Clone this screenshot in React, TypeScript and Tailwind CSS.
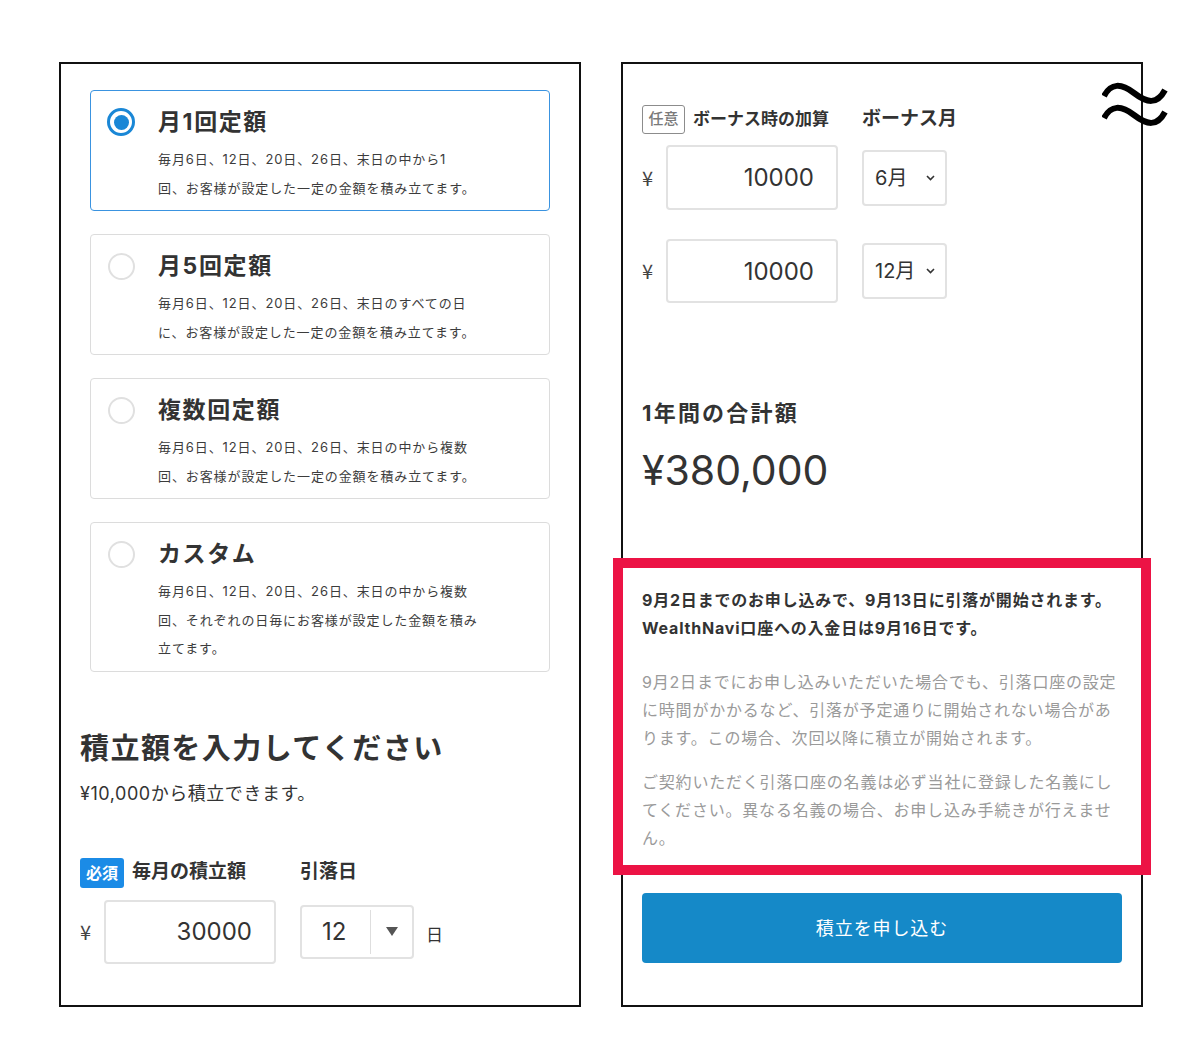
import type { ReactNode } from 'react';

const plans = [
  {
    title: '月1回定額',
    desc: ['毎月6日、12日、20日、26日、末日の中から1', '回、お客様が設定した一定の金額を積み立てます。'],
    selected: true,
  },
  {
    title: '月5回定額',
    desc: ['毎月6日、12日、20日、26日、末日のすべての日', 'に、お客様が設定した一定の金額を積み立てます。'],
  },
  {
    title: '複数回定額',
    desc: ['毎月6日、12日、20日、26日、末日の中から複数', '回、お客様が設定した一定の金額を積み立てます。'],
  },
  {
    title: 'カスタム',
    desc: [
      '毎月6日、12日、20日、26日、末日の中から複数',
      '回、それぞれの日毎にお客様が設定した金額を積み',
      '立てます。',
    ],
  },
];

function Radio({ checked }: { checked?: boolean }) {
  if (checked) {
    return (
      <span className="flex size-[28px] items-center justify-center rounded-full border-[3px] border-[#1a87d6]">
        <span className="size-[15px] rounded-full bg-[#1a87d6]" />
      </span>
    );
  }
  return <span className="m-[0.5px] block size-[27px] rounded-full border-2 border-[#e0e0e0]" />;
}

function PlanCard({ title, desc, selected }: { title: string; desc: string[]; selected?: boolean }) {
  return (
    <label
      className={
        'flex gap-[23px] rounded-[4px] border pt-[15px] pb-[8px] pl-[16px] ' +
        (selected ? 'border-[#3a93e0]' : 'border-[#dcdcdc]')
      }
    >
      <div className="pt-[2px]">
        <Radio checked={selected} />
      </div>
      <div className="w-[330px]">
        <div className="text-[23px] leading-[32px] font-bold tracking-[0.07em] text-[#333]">{title}</div>
        <p className="mt-[7px] text-[13px] leading-[28.5px] tracking-[0.9px] whitespace-nowrap text-[#3c3c3c]">
          {desc.map((line, i) => (
            <span key={i} className="block">
              {line}
            </span>
          ))}
        </p>
      </div>
    </label>
  );
}

function AmountInput({ value, tall }: { value: string; tall?: boolean }) {
  return (
    <div className="flex items-center">
      <span className="w-[24px] font-['Noto_Sans_CJK_JP',sans-serif] text-[20px] text-[#444]">¥</span>
      <input
        type="text"
        readOnly
        value={value}
        className={
          'w-[172px] rounded-[4px] border-2 border-[#e2e2e2] pr-[22px] text-right text-[24px] text-[#333] outline-none ' +
          (tall ? 'h-[65px]' : 'h-[64px]')
        }
      />
    </div>
  );
}

function MonthSelect({ value }: { value: string }) {
  return (
    <div className="flex h-[56px] w-[85px] items-center justify-between rounded-[4px] border-2 border-[#e2e2e2] pr-[10px] pl-[11px]">
      <span className="text-[20px] text-[#333]">{value}</span>
      <svg width="9" height="6" viewBox="0 0 9 6" fill="none" stroke="#333" strokeWidth="1.6">
        <polyline points="1,1 4.5,4.5 8,1" />
      </svg>
    </div>
  );
}

function FieldLabel({ badge, children, required }: { badge: string; children: ReactNode; required?: boolean }) {
  return (
    <div className="flex w-[220px] items-center">
      {required ? (
        <span className="flex h-[30px] w-[44px] items-center justify-center rounded-[3px] bg-[#1b8be6] text-[16px] font-bold text-white">
          {badge}
        </span>
      ) : (
        <span className="flex h-[29px] w-[43px] items-center justify-center rounded-[3px] border border-[#8c8c8c] text-[15px] font-medium text-[#7a7a7a]">
          {badge}
        </span>
      )}
      <span className={'ml-[8px] font-bold text-[#333] ' + (required ? 'text-[19px]' : 'text-[17px]')}>{children}</span>
    </div>
  );
}

// two stacked tildes marking where the long form was cut
function BreakMark() {
  return (
    <svg
      className="absolute top-[17px] right-[-27px]"
      width="66"
      height="48"
      viewBox="0 0 66 48"
      fill="none"
      stroke="#000"
      strokeWidth="6"
    >
      <path d="M2 15 C9 2, 19 2, 32 12 S55 24, 63 9" />
      <path d="M2 37 C9 24, 19 24, 32 34 S55 46, 63 31" />
    </svg>
  );
}

export default function App() {
  return (
    <div className="min-h-[1064px] bg-white font-['Inter','Noto_Sans_CJK_JP',sans-serif] text-[#333]">
      <div className="flex gap-[40px] pt-[62px] pl-[59px]">
        {/* left: plan choice and monthly amount */}
        <section className="flex h-[945px] w-[522px] flex-col border-2 border-[#111] px-[19px] pt-[26px]">
          <div className="mx-[10px] flex flex-col gap-[23px]">
            {plans.map((p) => (
              <PlanCard key={p.title} {...p} />
            ))}
          </div>

          <h2 className="mt-[57px] text-[29px] leading-[40px] font-bold tracking-[0.05em]">積立額を入力してください</h2>
          <p className="mt-[12px] text-[18px] leading-[26px] tracking-[0.03em]">¥10,000から積立できます。</p>

          <div className="mt-[51px] flex items-center">
            <FieldLabel badge="必須" required>
              毎月の積立額
            </FieldLabel>
            <span className="text-[19px] font-bold">引落日</span>
          </div>

          <div className="mt-[12px] flex items-center">
            <AmountInput value="30000" />
            <div className="ml-[24px] flex h-[54px] w-[114px] items-center rounded-[4px] border-2 border-[#e2e2e2]">
              <span className="w-[68px] pl-[20px] text-[24px] text-[#333]">12</span>
              <span className="h-[44px] w-px bg-[#dedede]" />
              <span className="flex flex-1 justify-center">
                <svg width="12" height="9" viewBox="0 0 12 9">
                  <polygon points="0,0 12,0 6,9" fill="#555" />
                </svg>
              </span>
            </div>
            <span className="mt-[8px] ml-[12px] text-[17px]">日</span>
          </div>
        </section>

        {/* right: bonus months, yearly total and notice */}
        <section className="relative flex h-[945px] w-[522px] flex-col border-2 border-[#111] px-[19px] pt-[41px]">
          <BreakMark />

          <div className="flex items-center">
            <FieldLabel badge="任意">ボーナス時の加算</FieldLabel>
            <span className="text-[19px] font-bold">ボーナス月</span>
          </div>

          <div className="mt-[11px] flex items-center">
            <AmountInput value="10000" tall />
            <div className="ml-[24px]">
              <MonthSelect value="6月" />
            </div>
          </div>
          <div className="mt-[29px] flex items-center">
            <AmountInput value="10000" />
            <div className="ml-[24px]">
              <MonthSelect value="12月" />
            </div>
          </div>

          <h3 className="mt-[94px] text-[22px] leading-[32px] font-bold tracking-[0.1em]">1年間の合計額</h3>
          <div className="mt-[17px] text-[41px] leading-[48px]">¥380,000</div>

          <div className="-mx-[29px] mt-[64px] border-[10px] border-[#ec1345] px-[19px] pt-[18px] pb-[13px]">
            <p className="text-[16px] leading-[28px] font-bold tracking-[0.05em] text-[#333]">
              9月2日までのお申し込みで、9月13日に引落が開始されます。
              <br />
              WealthNavi口座への入金日は9月16日です。
            </p>
            <p className="mt-[26px] text-[16px] leading-[28px] tracking-[0.05em] text-[#9a9a9a]">
              9月2日までにお申し込みいただいた場合でも、引落口座の設定に時間がかかるなど、引落が予定通りに開始されない場合があります。この場合、次回以降に積立が開始されます。
            </p>
            <p className="mt-[16px] text-[16px] leading-[28px] tracking-[0.05em] text-[#9a9a9a]">
              ご契約いただく引落口座の名義は必ず当社に登録した名義にしてください。異なる名義の場合、お申し込み手続きが行えません。
            </p>
          </div>

          <button
            type="button"
            className="mt-[18px] h-[70px] rounded-[4px] bg-[#1589c8] text-[18px] tracking-[0.05em] text-white"
          >
            積立を申し込む
          </button>
        </section>
      </div>
    </div>
  );
}
